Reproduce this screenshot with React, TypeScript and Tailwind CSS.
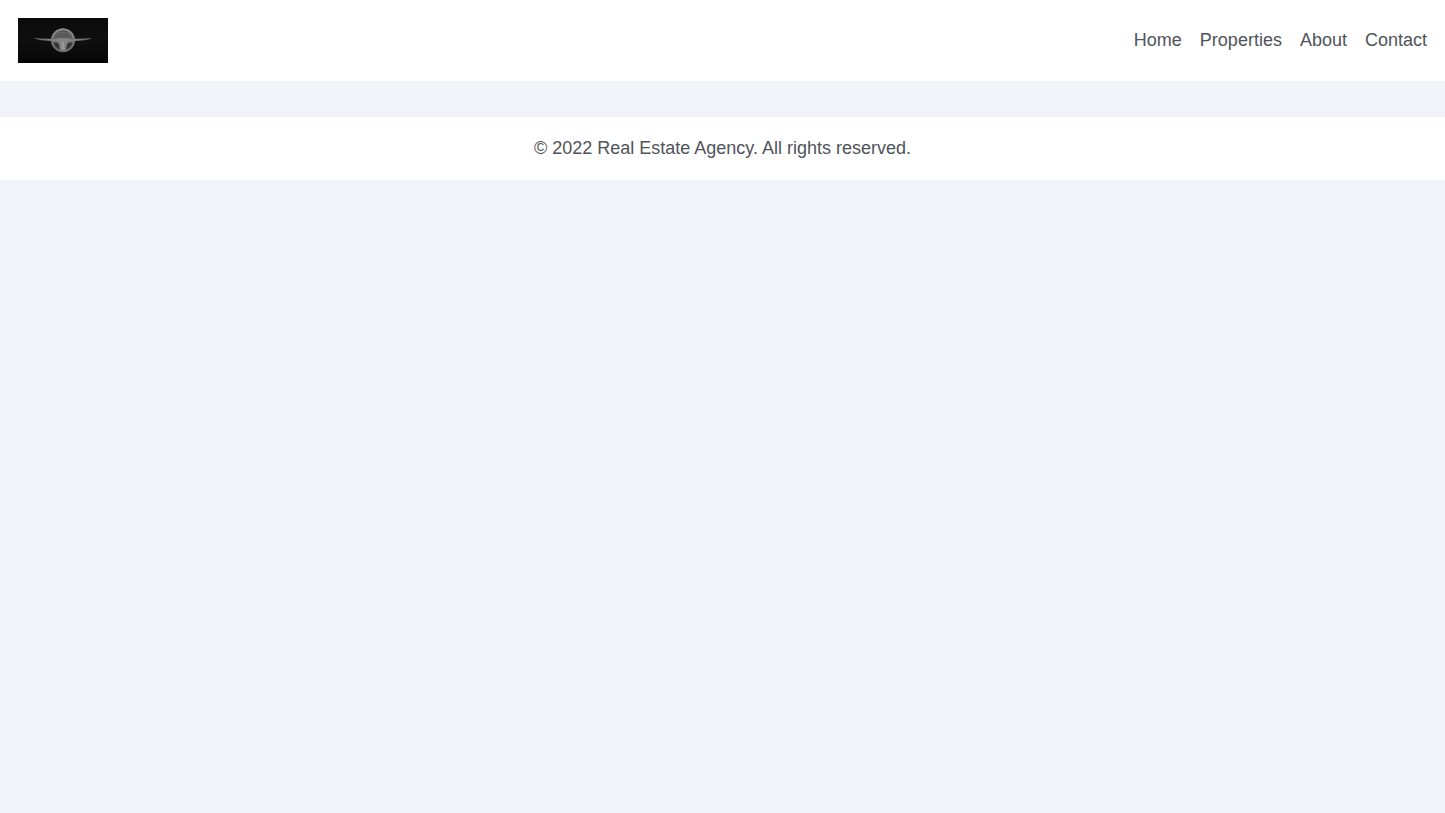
const links = ["Home", "Properties", "About", "Contact"];

function Logo() {
  return (
    <svg
      viewBox="0 0 90 45"
      className="block h-[45px] w-[90px]"
      role="img"
      aria-label="Real Estate Agency logo"
    >
      <defs>
        <linearGradient id="backdrop" x1="0" y1="0" x2="0" y2="1">
          <stop offset="0" stopColor="#0b0b0b" />
          <stop offset="0.5" stopColor="#0f0f0f" />
          <stop offset="0.85" stopColor="#090909" />
          <stop offset="1" stopColor="#020202" />
        </linearGradient>
        <linearGradient id="wing" x1="0" y1="0" x2="1" y2="0">
          <stop offset="0" stopColor="#5c5c5c" />
          <stop offset="0.3" stopColor="#858585" />
          <stop offset="0.7" stopColor="#858585" />
          <stop offset="1" stopColor="#5c5c5c" />
        </linearGradient>
        <linearGradient id="disc" x1="0" y1="0" x2="0" y2="1">
          <stop offset="0" stopColor="#4e4e4e" />
          <stop offset="0.6" stopColor="#666666" />
          <stop offset="1" stopColor="#303030" />
        </linearGradient>
        <linearGradient id="rim" x1="0" y1="0" x2="0" y2="1">
          <stop offset="0" stopColor="#8c8c8c" />
          <stop offset="1" stopColor="#686868" />
        </linearGradient>
      </defs>
      <rect width="90" height="45" fill="url(#backdrop)" />
      <path
        d="M16 19.8 Q23 21 34 20.8 H56 Q67 21 74 19.8 Q71 22.5 57 22.9 H33 Q19 22.5 16 19.8Z"
        fill="url(#wing)"
      />
      <circle cx="45" cy="22.2" r="11" fill="url(#disc)" stroke="url(#rim)" strokeWidth="2" />
      <path d="M37 17.5 Q45 11 53 17.5" fill="none" stroke="#707070" strokeWidth="0.8" />
      <path d="M35.5 24.5 Q40 24 41 27 L42 31.5 Q37 29.5 35.5 24.5Z" fill="#353535" />
      <path d="M54.5 24.5 Q50 24 49 27 L48 31.5 Q53 29.5 54.5 24.5Z" fill="#353535" />
      <path
        d="M34.5 21.5 Q39 20 45 20 Q51 20 55.5 21.5 L55 23.4 Q49 23 48.7 26 L48 32.5 H42 L41.3 26 Q41 23 35 23.4Z"
        fill="#848484"
      />
      <path d="M45 24 V31" stroke="#a2a2a2" strokeWidth="1.4" />
    </svg>
  );
}

export default function App() {
  return (
    <div className="min-h-screen bg-[#f2f3f8] font-['Liberation_Sans',Arial,sans-serif] text-[18px] leading-[27px] text-[#50535a]">
      <header className="flex items-center justify-between bg-white p-[18px]">
        <a href="#home">
          <Logo />
        </a>
        <nav aria-label="Main" className="flex gap-[18px]">
          {links.map((label) => (
            <a key={label} href={"#" + label.toLowerCase()}>
              {label}
            </a>
          ))}
        </nav>
      </header>
      <main className="p-[18px]" />
      <footer className="bg-white p-[18px] text-center">
        <p>© 2022 Real Estate Agency. All rights reserved.</p>
      </footer>
    </div>
  );
}
